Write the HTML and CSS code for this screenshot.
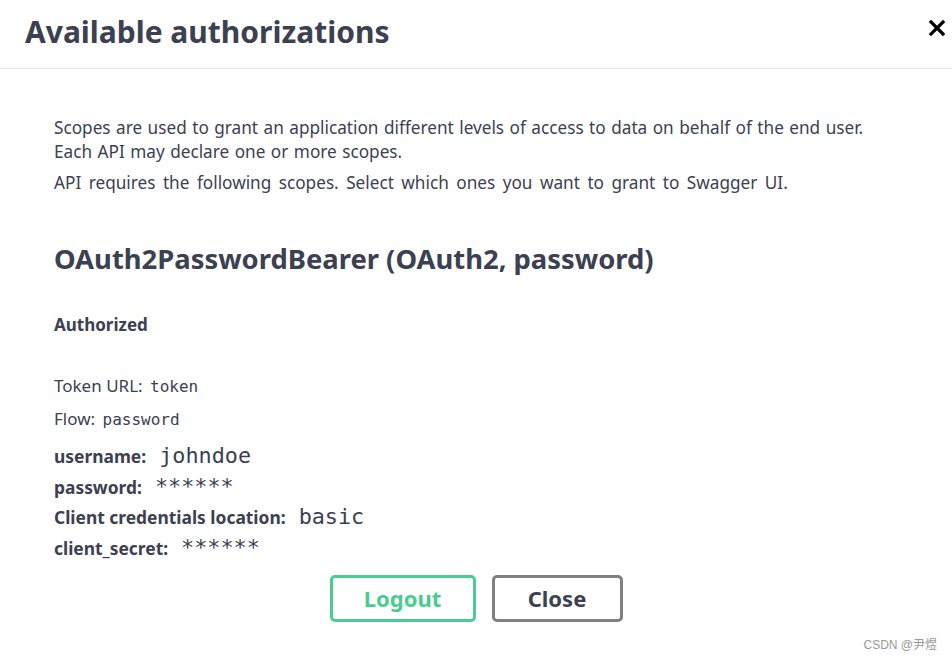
FILE: index.html
```html
<!DOCTYPE html>
<html>
<head>
<meta charset="utf-8">
<link rel="stylesheet" href="styles.css">
</head>
<body>
<div class="modal">
  <div class="modal-header">
    <h1 class="title">Available authorizations</h1>
    <button class="close-x" aria-label="close">
      <svg width="16" height="16" viewBox="0 0 16 16"><path d="M2 2 L14 14 M14 2 L2 14" stroke="#000" stroke-width="3.2" stroke-linecap="square"/></svg>
    </button>
  </div>
  <div class="modal-body">
    <p class="desc">Scopes are used to grant an application different levels of access to data on behalf of the end user. Each API may declare one or more scopes.</p>
    <p class="desc second">API requires the following scopes. Select which ones you want to grant to Swagger UI.</p>
    <h2 class="scheme">OAuth2PasswordBearer (OAuth2, password)</h2>
    <h4 class="authorized">Authorized</h4>
    <p class="meta">Token URL: <code class="small-code">token</code></p>
    <p class="meta flow">Flow: <code class="small-code">password</code></p>
    <div class="fields">
      <div class="field"><span class="label">username:</span><code class="val">johndoe</code></div>
      <div class="field"><span class="label">password:</span><code class="val">******</code></div>
      <div class="field"><span class="label">Client credentials location:</span><code class="val">basic</code></div>
      <div class="field"><span class="label">client_secret:</span><code class="val">******</code></div>
    </div>
    <div class="actions">
      <button class="btn logout">Logout</button>
      <button class="btn close">Close</button>
    </div>
  </div>
  <div class="watermark">CSDN @尹煜</div>
</div>
</body>
</html>
```
FILE: styles.css
```css
html, body {
  margin: 0;
  padding: 0;
  background: #fff;
}
body {
  font-family: "Noto Sans", "Noto Sans CJK SC", sans-serif;
  color: #3b4151;
  width: 952px;
  height: 659px;
  overflow: hidden;
}
.modal {
  position: relative;
  height: 659px;
}
.modal-header {
  height: 68px;
  border-bottom: 1px solid #ebebeb;
  display: flex;
  align-items: center;
  justify-content: space-between;
  padding: 0 7px 0 25px;
}
.title {
  margin: 0;
  font-size: 30px;
  font-weight: 700;
  line-height: 1;
  position: relative;
  top: -2px;
}
.close-x {
  background: none;
  border: 0;
  padding: 0;
  width: 16px;
  height: 16px;
  position: relative;
  top: -6px;
  cursor: pointer;
}
.close-x svg { display: block; }
.modal-body {
  padding: 47px 38px 0 54px;
}
.desc {
  margin: 0 32px 0 0;
  font-size: 17.2px;
  line-height: 24px;
  word-spacing: 1px;
}
.desc.second {
  margin-top: 7px;
  word-spacing: 3px;
}
.scheme {
  margin: 46px 0 0;
  font-size: 27.4px;
  font-weight: 700;
  line-height: 36px;
}
.authorized {
  margin: 36px 0 0;
  font-size: 17px;
  font-weight: 700;
  line-height: 24px;
}
.meta {
  margin: 37px 0 0;
  font-size: 17px;
  line-height: 24px;
}
.meta.flow { margin-top: 8px; }
.small-code {
  font-family: "DejaVu Sans Mono", monospace;
  font-size: 16px;
  margin-left: 3px;
}
.fields {
  margin-top: 9px;
}
.field {
  font-size: 17.4px;
  line-height: 30.7px;
  display: flex;
  align-items: baseline;
}
.label { font-weight: 700; margin-right: 13px; }
.val {
  font-family: "DejaVu Sans Mono", monospace;
  font-size: 21.8px;
}
.actions {
  display: flex;
  justify-content: center;
  gap: 16px;
  margin: 11px -38px 0 -54px;
}
.btn {
  font-family: "Noto Sans", sans-serif;
  font-size: 22px;
  font-weight: 700;
  background: #fff;
  border-radius: 5px;
  height: 47px;
  box-sizing: border-box;
  cursor: pointer;
  padding: 0;
}
.btn.logout {
  width: 146px;
  border: 3px solid #49cc90;
  color: #49cc90;
}
.btn.close {
  width: 131px;
  border: 3px solid #808080;
  color: #3b4151;
}
.watermark {
  position: absolute;
  right: 15px;
  bottom: 7px;
  font-size: 12px;
  color: #999;
  font-family: "Liberation Sans", "Noto Sans CJK SC", sans-serif;
}
```
